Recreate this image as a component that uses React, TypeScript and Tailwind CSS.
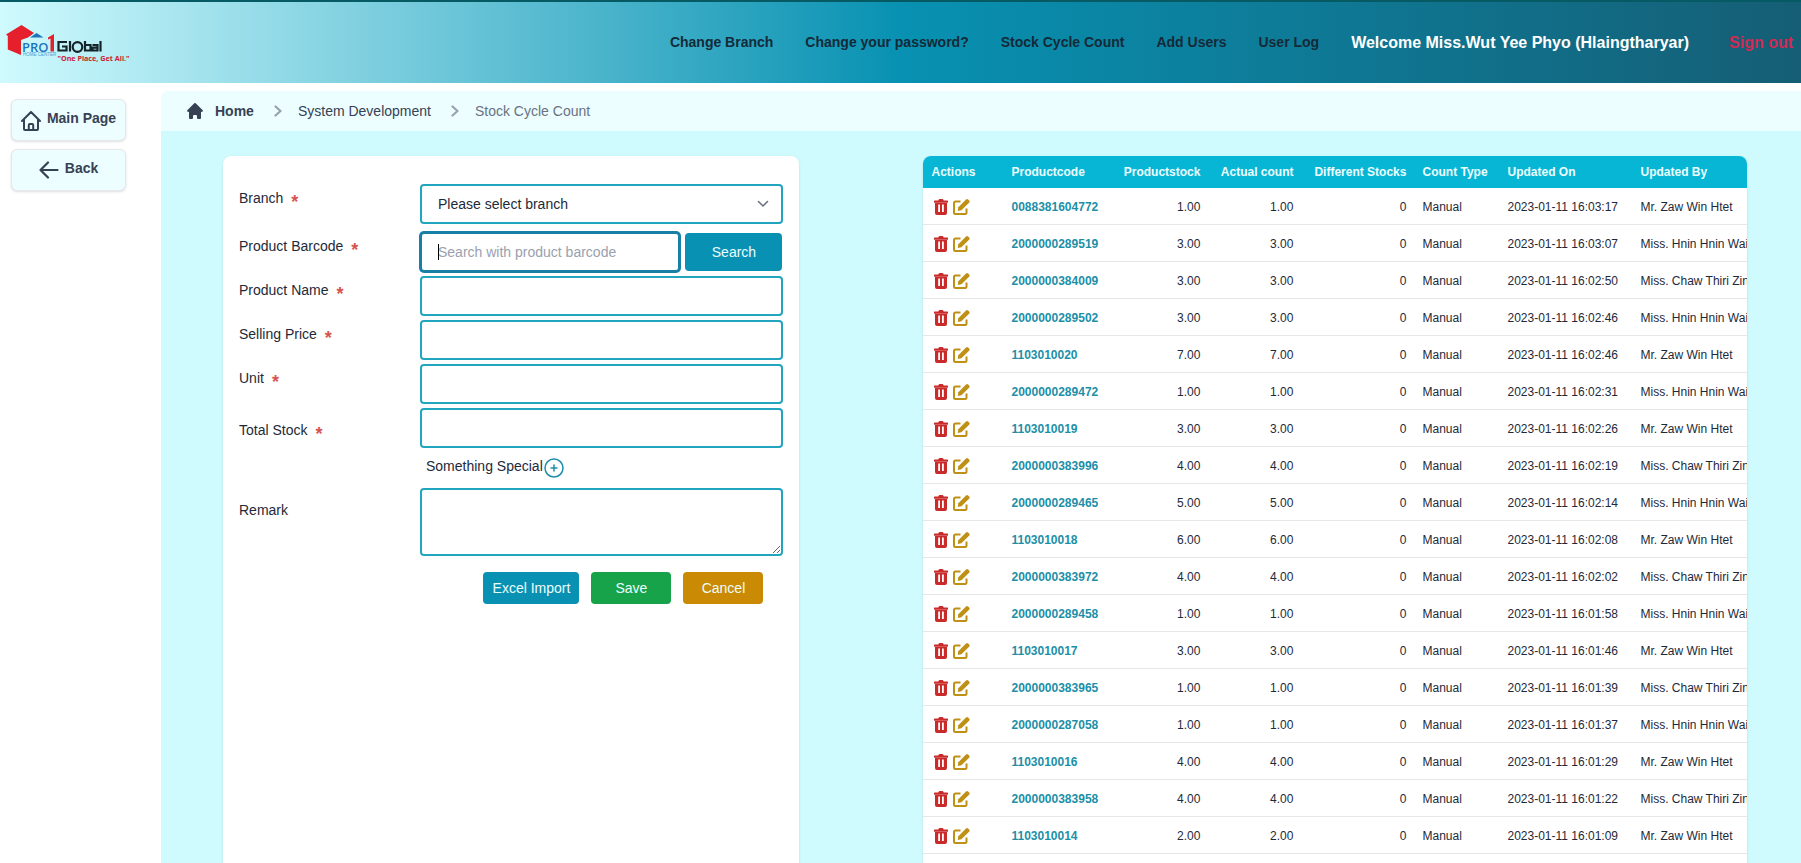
import React from "react";

type Row = { code: string; qty: string; at: string; by: string };

const ZAW = "Mr. Zaw Win Htet";
const HNIN = "Miss. Hnin Hnin Wai";
const CHAW = "Miss. Chaw Thiri Zin";

const rows: Row[] = [
  { code: "0088381604772", qty: "1.00", at: "16:03:17", by: ZAW },
  { code: "2000000289519", qty: "3.00", at: "16:03:07", by: HNIN },
  { code: "2000000384009", qty: "3.00", at: "16:02:50", by: CHAW },
  { code: "2000000289502", qty: "3.00", at: "16:02:46", by: HNIN },
  { code: "1103010020", qty: "7.00", at: "16:02:46", by: ZAW },
  { code: "2000000289472", qty: "1.00", at: "16:02:31", by: HNIN },
  { code: "1103010019", qty: "3.00", at: "16:02:26", by: ZAW },
  { code: "2000000383996", qty: "4.00", at: "16:02:19", by: CHAW },
  { code: "2000000289465", qty: "5.00", at: "16:02:14", by: HNIN },
  { code: "1103010018", qty: "6.00", at: "16:02:08", by: ZAW },
  { code: "2000000383972", qty: "4.00", at: "16:02:02", by: CHAW },
  { code: "2000000289458", qty: "1.00", at: "16:01:58", by: HNIN },
  { code: "1103010017", qty: "3.00", at: "16:01:46", by: ZAW },
  { code: "2000000383965", qty: "1.00", at: "16:01:39", by: CHAW },
  { code: "2000000287058", qty: "1.00", at: "16:01:37", by: HNIN },
  { code: "1103010016", qty: "4.00", at: "16:01:29", by: ZAW },
  { code: "2000000383958", qty: "4.00", at: "16:01:22", by: CHAW },
  { code: "1103010014", qty: "2.00", at: "16:01:09", by: ZAW },
];

const navLinks = ["Change Branch", "Change your password?", "Stock Cycle Count", "Add Users", "User Log"];

const fieldClass = "h-10 w-full rounded border-2 border-[#22a6bf] bg-white px-4 text-sm text-gray-800 outline-none";

function Logo() {
  return (
    <svg width="124" height="40" viewBox="0 0 124 40" role="img" aria-label="PRO1 Global" className="block">
      <path d="M0 10.500 15.500 1 28 9 22 13.500 15 16v15L1.800 25.500V12z" fill="#e51f2b" />
      <path d="m24 13.500 6.500-4.500 7 4.500z" fill="#1d74bd" />
      <text x="16" y="27.500" fontSize="13" fontWeight="600" fill="#1d74bd" fontFamily="Open Sans, sans-serif">PRO</text>
      <path d="M42 13.500 48 10v17.500h-3.500V14.500L42 15.500z" fill="#e51f2b" />
      <text x="17" y="32" fontSize="4.500" fill="#4a9bd0" fontFamily="Liberation Sans, sans-serif">HOME CENTER</text>
      <g fill="none" stroke="#15242b" strokeWidth="2.200">
        <path d="M61 18h-8.500v8.500h8v-4H56M64 17v10.500" />
        <circle cx="71.500" cy="23" r="4.800" />
        <path d="M79 17v9.500h5.500V21H79M86.500 21h5v5.500h-5v-2.800h5M94.500 17v10.500" />
      </g>
      <text x="51.500" y="37" fontSize="7.200" fontWeight="700" fill="#cf2230" fontFamily="Noto Sans, sans-serif">"One Place, Get All."</text>
    </svg>
  );
}

function HomeOutline() {
  return (
    <svg width="20" height="20" viewBox="0 0 20 20" fill="none" stroke="currentColor" strokeWidth="2" strokeLinecap="round" strokeLinejoin="round" aria-hidden="true">
      <path d="m1 10 9-9 9 9M3 8.500V18a1 1 0 0 0 1 1h12a1 1 0 0 0 1-1V8.500M7.800 19v-5a1 1 0 0 1 1-1h2.400a1 1 0 0 1 1 1v5" />
    </svg>
  );
}

function ArrowBack() {
  return (
    <svg width="20" height="18" viewBox="0 0 20 18" fill="none" stroke="currentColor" strokeWidth="2.200" strokeLinecap="round" strokeLinejoin="round" aria-hidden="true">
      <path d="M9 1.500 1.500 9 9 16.500M1.500 9H18.500" />
    </svg>
  );
}

function TrashIcon() {
  return (
    <svg width="14" height="16" viewBox="0 0 14 16" aria-hidden="true">
      <path fillRule="evenodd" d="M4.300 1.500 4.800.600A1 1 0 0 1 5.600 0h2.800A1 1 0 0 1 9.200.600l.5.900H13.200a.8.8 0 0 1 0 2.200H.8a.8.8 0 0 1 0-2.200zM1 3.500h12V14a2 2 0 0 1-2 2H3a2 2 0 0 1-2-2zM4.200 5.500v7.500h1.800V5.500zm3.800 0v7.500h1.800V5.500z" fill="currentColor" />
    </svg>
  );
}

function EditIcon() {
  return (
    <svg width="17" height="16" viewBox="0 0 17 16" fill="none" aria-hidden="true">
      <path d="M7.500 2.500H2.500A1.500 1.500 0 0 0 1 4v9.500A1.500 1.500 0 0 0 2.500 15h9.500a1.500 1.500 0 0 0 1.500-1.500V9.500" stroke="currentColor" strokeWidth="2" />
      <path d="M5.300 8.200 13 .600a1.500 1.500 0 0 1 2.100 0l1 1a1.500 1.500 0 0 1 0 2.100L8.400 11.300l-3.600.600z" fill="currentColor" />
    </svg>
  );
}

function Chevron() {
  return (
    <svg width="8" height="14" viewBox="0 0 8 14" fill="none" stroke="currentColor" strokeWidth="2.200" strokeLinecap="round" strokeLinejoin="round" className="text-gray-400" aria-hidden="true">
      <path d="m1.500 2.500 5 4.500-5 4.500" />
    </svg>
  );
}

function Field({ id, label, required = true, low = false, children }: { id: string; label: string; required?: boolean; low?: boolean; children: React.ReactNode }) {
  return (
    <div className="flex">
      <label htmlFor={id} className={`flex h-5 w-[181px] shrink-0 gap-2 text-sm text-gray-800 ${low ? "mt-3" : "mt-1"}`}>
        {label}
        {required && <span className="mt-1 text-lg leading-5 font-bold text-[#d9534f]">*</span>}
      </label>
      <div className="flex min-w-0 flex-1">{children}</div>
    </div>
  );
}

export default function App() {
  return (
    <div className="flex h-screen flex-col overflow-hidden bg-white font-['Liberation_Sans',Arial,sans-serif]">
      <header className="flex h-[83px] shrink-0 items-center border-t-2 border-[#065a64] bg-linear-to-r/srgb from-[#cffafe] via-[#0891b2] to-[#155e75] pr-2 pb-0.5 pl-1.5">
        <a href="#home" className="pt-1"><Logo /></a>
        <nav className="ml-auto flex items-center gap-8 text-sm font-bold text-[#142a38]">
          {navLinks.map((l) => (
            <a key={l} href="#nav">{l}</a>
          ))}
        </nav>
        <span className="ml-8 pt-0.5 text-base font-bold text-white">Welcome Miss.Wut Yee Phyo (Hlaingtharyar)</span>
        <button type="button" className="ml-10 pt-0.5 text-base font-bold text-[#cf2a55]">Sign out</button>
      </header>

      <div className="flex min-h-0 flex-1 pt-2">
        <aside className="flex w-[161px] shrink-0 flex-col gap-2 pt-2 pr-[35px] pl-[11px] text-sm font-bold text-gray-700">
          <button type="button" className="flex h-[42px] items-center justify-center gap-1.5 rounded-md border border-gray-200 bg-[#ecfeff] shadow">
            <span className="pt-0.5"><HomeOutline /></span>
            <span className="pb-1">Main Page</span>
          </button>
          <button type="button" className="flex h-[42px] items-center justify-center gap-1.5 rounded-md border border-gray-200 bg-[#ecfeff] shadow">
            <ArrowBack />
            <span className="pb-1">Back</span>
          </button>
        </aside>

        <main className="flex min-w-0 flex-1 flex-col overflow-hidden rounded-tl-lg bg-[#cffafe]">
          <nav aria-label="Breadcrumb" className="flex h-10 shrink-0 items-center bg-[#ecfeff] px-6 text-sm text-gray-700">
            <svg width="20" height="20" viewBox="0 0 20 20" fill="currentColor" aria-hidden="true">
              <path d="M10.700 2.300a1 1 0 0 0-1.400 0l-7 7a1 1 0 0 0 1.400 1.400L4 10.400V17a1 1 0 0 0 1 1h2a1 1 0 0 0 1-1v-2a1 1 0 0 1 1-1h2a1 1 0 0 1 1 1v2a1 1 0 0 0 1 1h2a1 1 0 0 0 1-1v-6.600l.3.300a1 1 0 0 0 1.400-1.400z" />
            </svg>
            <a href="#home" className="mr-5 ml-2.5 font-bold">Home</a>
            <Chevron />
            <a href="#system" className="mr-5 ml-4">System Development</a>
            <Chevron />
            <span className="ml-4 text-gray-500">Stock Cycle Count</span>
          </nav>

          <div className="grid min-h-0 flex-1 grid-cols-[7fr_10fr] gap-31 pt-[25px] pr-[54px] pl-[62px]">
            <form className="min-w-0 rounded-t-lg bg-white px-4 pt-7 shadow" onSubmit={(e) => e.preventDefault()}>
              <Field id="branch" label="Branch">
                <div className="relative w-full">
                  <select id="branch" className={`${fieldClass} appearance-none`}>
                    <option>Please select branch</option>
                  </select>
                  <svg width="12" height="8" viewBox="0 0 12 8" fill="none" stroke="#6b7280" strokeWidth="1.600" strokeLinecap="round" strokeLinejoin="round" className="pointer-events-none absolute top-4 right-3.5" aria-hidden="true">
                    <path d="m1.500 1.500 4.500 4.500 4.500-4.500" />
                  </svg>
                </div>
              </Field>
              <div className="flex flex-col gap-1 pt-2">
                <Field id="barcode" label="Product Barcode">
                  <div className="relative min-w-0 flex-1">
                    <input id="barcode" placeholder="Search with product barcode" className="h-10 w-full rounded border-2 border-[#187fa6] bg-white px-4 text-sm text-gray-800 ring ring-[#187fa6] outline-none placeholder:text-gray-400" />
                    <span className="pointer-events-none absolute top-3 left-[18px] h-4 w-px bg-black" aria-hidden="true" />
                  </div>
                  <button type="button" className="my-px mr-px ml-[5px] w-[97px] rounded bg-[#0891b2] text-sm text-cyan-50">Search</button>
                </Field>
                <Field id="name" label="Product Name"><input id="name" className={fieldClass} /></Field>
                <Field id="price" label="Selling Price"><input id="price" className={fieldClass} /></Field>
                <Field id="unit" label="Unit"><input id="unit" className={fieldClass} /></Field>
                <Field id="total" label="Total Stock" low><input id="total" className={fieldClass} /></Field>
              </div>
              <div className="flex h-10 items-center pl-[187px] text-sm text-gray-800">
                <span className="pb-1">Something Special</span>
                <button type="button" aria-label="Add something special" className="ml-px text-[#1b8fa8]">
                  <svg width="20" height="20" viewBox="0 0 20 20" fill="none" stroke="currentColor" strokeWidth="1.500" strokeLinecap="round">
                    <circle cx="10" cy="10" r="9" />
                    <path d="M10 7v6M7 10h6" />
                  </svg>
                </button>
              </div>
              <Field id="remark" label="Remark" required={false} low>
                <textarea id="remark" className="block h-[68px] w-full rounded border-2 border-[#22a6bf] bg-white px-4 py-2 text-sm outline-none" />
              </Field>
              <div className="flex justify-end gap-3 pt-4 pr-5 text-sm text-cyan-50">
                <button type="button" className="h-8 w-24 rounded bg-[#0891b2]">Excel Import</button>
                <button type="submit" className="h-8 w-20 rounded bg-[#16a34a]">Save</button>
                <button type="button" className="h-8 w-20 rounded bg-[#ca8a04]">Cancel</button>
              </div>
            </form>

            <section className="min-w-0 overflow-hidden rounded-t-lg bg-white shadow">
              <table className="w-[870px] table-fixed border-separate border-spacing-0 text-xs whitespace-nowrap">
                <colgroup>
                  <col className="w-20" />
                  <col className="w-28" />
                  <col className="w-[93px]" />
                  <col className="w-[93px]" />
                  <col className="w-[113px]" />
                  <col className="w-[85px]" />
                  <col className="w-[133px]" />
                  <col />
                </colgroup>
                <thead className="bg-[#06b6d4] text-cyan-50">
                  <tr className="h-8 text-left">
                    <th className="px-2">Actions</th>
                    <th className="px-2">Productcode</th>
                    <th className="px-2 text-right">Productstock</th>
                    <th className="px-2 text-right">Actual count</th>
                    <th className="px-2 text-right">Different Stocks</th>
                    <th className="px-2">Count Type</th>
                    <th className="px-2">Updated On</th>
                    <th className="px-2">Updated By</th>
                  </tr>
                </thead>
                <tbody className="text-gray-800">
                  {rows.map((r) => (
                    <tr key={r.code} className="h-[37px] *:border-b *:border-gray-200 *:px-2 *:pt-px">
                      <td>
                        <div className="flex items-center gap-[5px] pl-[3px]">
                          <button type="button" aria-label={`Delete ${r.code}`} className="text-[#c92a2a]"><TrashIcon /></button>
                          <button type="button" aria-label={`Edit ${r.code}`} className="text-[#bf9016]"><EditIcon /></button>
                        </div>
                      </td>
                      <td><a href="#product" className="font-bold text-[#1c8fa8]">{r.code}</a></td>
                      <td className="text-right">{r.qty}</td>
                      <td className="text-right">{r.qty}</td>
                      <td className="text-right">0</td>
                      <td>Manual</td>
                      <td>2023-01-11 {r.at}</td>
                      <td>{r.by}</td>
                    </tr>
                  ))}
                </tbody>
              </table>
            </section>
          </div>
        </main>
      </div>
    </div>
  );
}
